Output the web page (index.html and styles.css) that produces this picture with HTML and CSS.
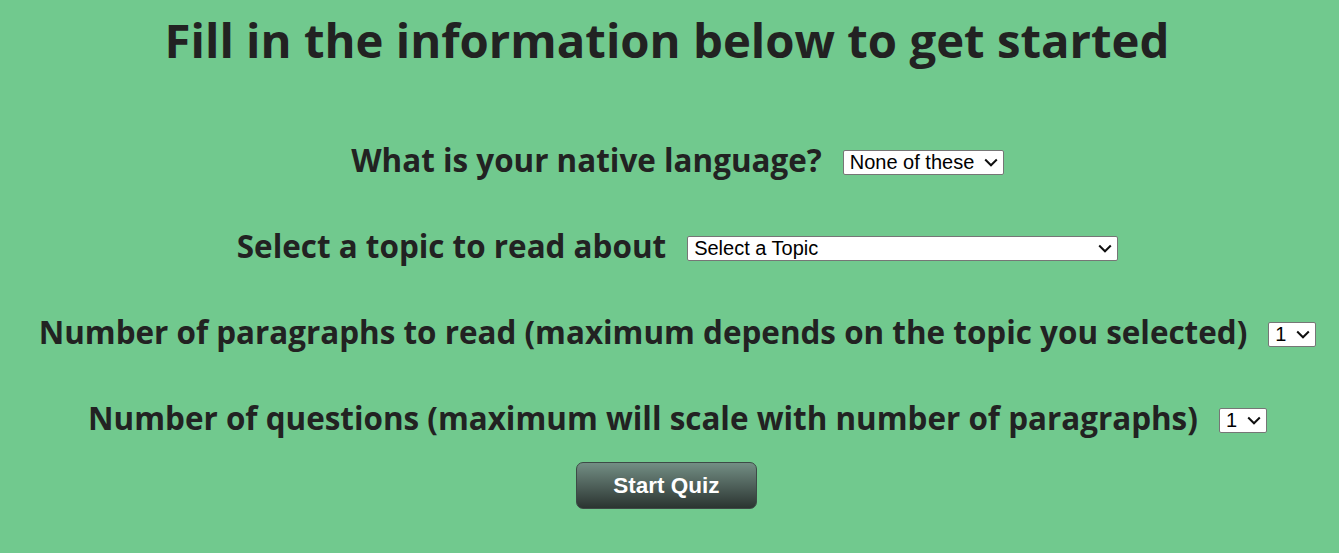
FILE: index.html
```
<!DOCTYPE html>
<html lang="en">
<head>
<meta charset="utf-8">
<title>Get started</title>
<link rel="stylesheet" href="styles.css">
</head>
<body>
<main class="page">
  <h1 class="title">Fill in the information below to get started</h1>
  <form class="form">
    <div class="row row-lang">
      <label class="label" for="lang">What is your native language?</label>
      <select id="lang" class="select select-lang"><option>None of these</option></select>
    </div>
    <div class="row">
      <label class="label" for="topic">Select a topic to read about</label>
      <select id="topic" class="select select-topic"><option>Select a Topic</option></select>
    </div>
    <div class="row">
      <label class="label" for="paras">Number of paragraphs to read (maximum depends on the topic you selected)</label>
      <select id="paras" class="select select-num"><option>1</option></select>
    </div>
    <div class="row">
      <label class="label" for="qs">Number of questions (maximum will scale with number of paragraphs)</label>
      <select id="qs" class="select select-num"><option>1</option></select>
    </div>
    <button type="button" class="start">Start Quiz</button>
  </form>
</main>
</body>
</html>
```
FILE: styles.css
```
html, body {
  margin: 0;
  padding: 0;
  background: #71c98e;
}
body {
  font-family: "Open Sans", "Noto Sans", sans-serif;
  color: #222222;
}
.page {
  display: flex;
  flex-direction: column;
  align-items: center;
  padding-top: 10px;
}
.title {
  margin: 0 5px 0 0;
  font-size: 47.3px;
  font-weight: 700;
  line-height: 60px;
}
.form {
  display: flex;
  flex-direction: column;
  align-items: center;
  margin-top: 72px;
}
.row {
  display: flex;
  align-items: center;
  gap: 21px;
  height: 40px;
  margin-bottom: 46px;
  padding-left: 16px;
}
.row:nth-child(4) {
  margin-bottom: 22px;
}
.label {
  font-size: 31.4px;
  font-weight: 700;
  line-height: 40px;
  position: relative;
  top: -2px;
}
.select {
  -webkit-appearance: none;
  appearance: none;
  font-family: "Liberation Sans", Arial, sans-serif;
  font-size: 20px;
  line-height: 22px;
  height: 25px;
  padding: 0 22px 0 6px;
  border: 1px solid #767676;
  border-radius: 2px;
  background-color: #fff;
  background-image: url("data:image/svg+xml,%3Csvg xmlns='http://www.w3.org/2000/svg' width='14' height='9' viewBox='0 0 14 9'%3E%3Cpath d='M1.2 1.5l5.8 5.8 5.8-5.8' fill='none' stroke='%23111' stroke-width='2'/%3E%3C/svg%3E");
  background-repeat: no-repeat;
  background-position: right 5px center;
  color: #000;
}
.select-lang { width: 161px; }
.select-topic { width: 431px; }
.select-num { width: 48px; }
.start {
  width: 181px;
  height: 47px;
  margin-left: -6px;
  border: 1px solid #3d4a46;
  border-radius: 7px;
  background: linear-gradient(#738e84, #2b3431);
  color: #fff;
  font-family: "Liberation Sans", Arial, sans-serif;
  font-weight: 700;
  font-size: 22.5px;
  cursor: pointer;
}
```
